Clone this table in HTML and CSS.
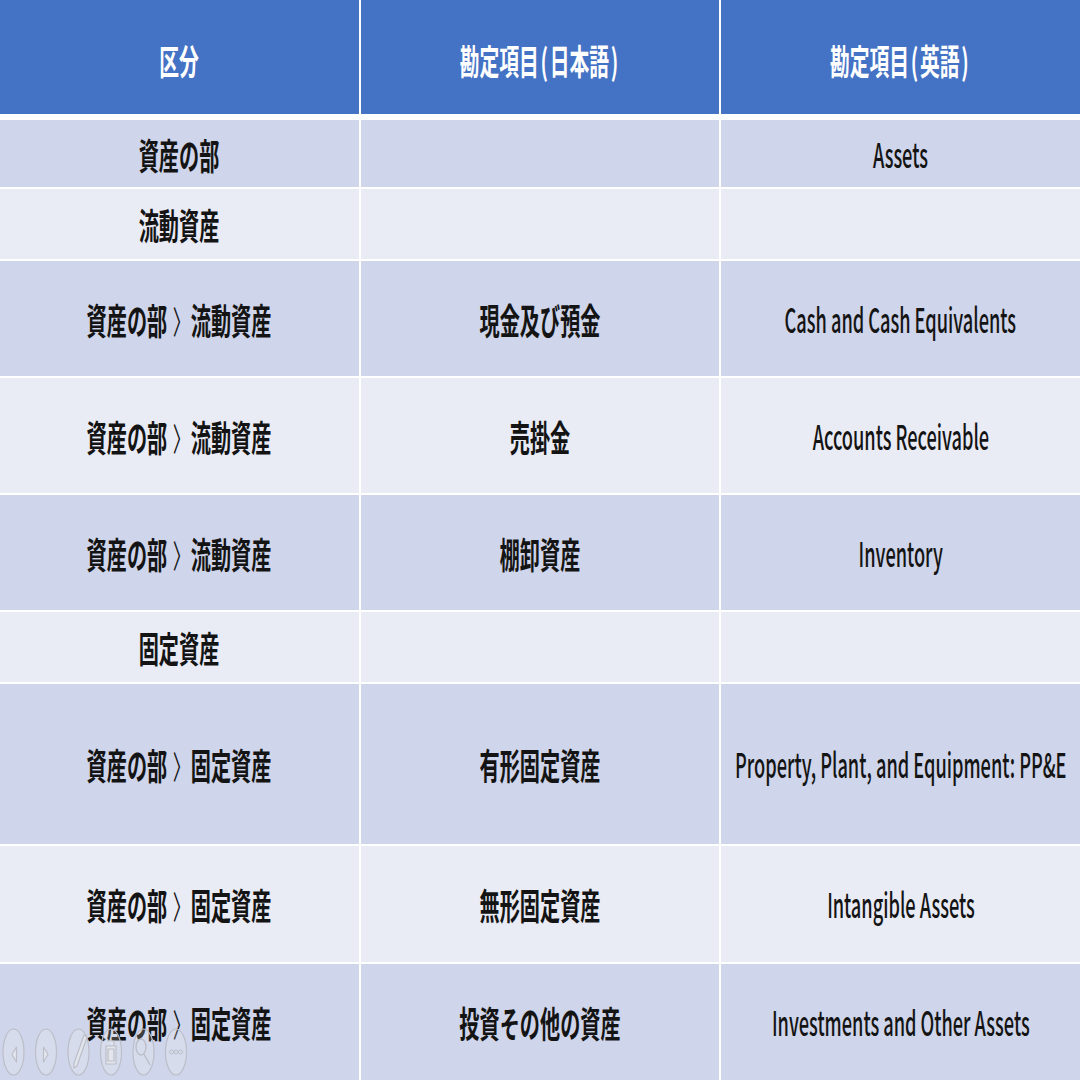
FILE: index.html
```html
<!DOCTYPE html>
<html lang="ja">
<head>
<meta charset="utf-8">
<title>勘定項目</title>
<link rel="stylesheet" href="styles.css">
</head>
<body>
<div class="sheet">
  <div class="grid head">
    <div class="cell"><span class="t">区分</span></div>
    <div class="cell"><span class="t">勘定項目<span class="p">(</span>日本語<span class="p">)</span></span></div>
    <div class="cell"><span class="t">勘定項目<span class="p">(</span>英語<span class="p">)</span></span></div>
  </div>
  <div class="grid body">
    <div class="cell dark"><span class="t">資産の部</span></div>
    <div class="cell dark"></div>
    <div class="cell dark"><span class="t en">Assets</span></div>

    <div class="cell light"><span class="t">流動資産</span></div>
    <div class="cell light"></div>
    <div class="cell light"></div>

    <div class="cell dark"><span class="t">資産の部<span class="chev">〉</span>流動資産</span></div>
    <div class="cell dark"><span class="t">現金及び預金</span></div>
    <div class="cell dark"><span class="t en">Cash and Cash Equivalents</span></div>

    <div class="cell light"><span class="t">資産の部<span class="chev">〉</span>流動資産</span></div>
    <div class="cell light"><span class="t">売掛金</span></div>
    <div class="cell light"><span class="t en">Accounts Receivable</span></div>

    <div class="cell dark"><span class="t">資産の部<span class="chev">〉</span>流動資産</span></div>
    <div class="cell dark"><span class="t">棚卸資産</span></div>
    <div class="cell dark"><span class="t en">Inventory</span></div>

    <div class="cell light"><span class="t">固定資産</span></div>
    <div class="cell light"></div>
    <div class="cell light"></div>

    <div class="cell dark"><span class="t">資産の部<span class="chev">〉</span>固定資産</span></div>
    <div class="cell dark"><span class="t">有形固定資産</span></div>
    <div class="cell dark"><span class="t en">Property, Plant, and Equipment: PP&amp;E</span></div>

    <div class="cell light"><span class="t">資産の部<span class="chev">〉</span>固定資産</span></div>
    <div class="cell light"><span class="t">無形固定資産</span></div>
    <div class="cell light"><span class="t en">Intangible Assets</span></div>

    <div class="cell dark"><span class="t">資産の部<span class="chev">〉</span>固定資産</span></div>
    <div class="cell dark"><span class="t">投資その他の資産</span></div>
    <div class="cell dark"><span class="t en">Investments and Other Assets</span></div>
  </div>

  <svg class="controls" width="192" height="52" viewBox="0 0 192 52" aria-hidden="true">
    <g fill="rgba(255,255,255,0.18)" stroke="#bcbec8" stroke-width="1.2">
      <ellipse cx="13.5" cy="26" rx="10.5" ry="23"/>
      <ellipse cx="46" cy="26" rx="10.5" ry="23"/>
      <ellipse cx="78.5" cy="26" rx="10.5" ry="23"/>
      <ellipse cx="111" cy="26" rx="10.5" ry="23"/>
      <ellipse cx="143.5" cy="26" rx="10.5" ry="23"/>
      <ellipse cx="176" cy="26" rx="10.5" ry="23"/>
    </g>
    <g fill="#e4e6ee" stroke="#bcbec8" stroke-width="1.2" stroke-linejoin="round">
      <path d="M16.5 21 L12 28.5 L16.5 36 Z"/>
      <path d="M43.5 21 L48 28.5 L43.5 36 Z"/>
      <path d="M84 9 L87 11 L77 40 L74 42 L74 37.5 Z"/>
      <path d="M107 15 h7 v5 M106 20 h10 v18 h-10 Z"/>
      <rect x="108" y="23" width="6" height="12"/>
    </g>
    <g fill="none" stroke="#bcbec8" stroke-width="1.4">
      <ellipse cx="141" cy="21" rx="5" ry="8"/>
      <path d="M144 28 L150 39"/>
    </g>
    <g fill="none" stroke="#bcbec8" stroke-width="1">
      <circle cx="171.5" cy="26" r="2"/>
      <circle cx="176" cy="26" r="2"/>
      <circle cx="180.5" cy="26" r="2"/>
    </g>
  </svg>
</div>
</body>
</html>
```

FILE: styles.css
```css
html, body {
  margin: 0;
  padding: 0;
  background: #ffffff;
}

.sheet {
  position: relative;
  width: 1080px;
  height: 1080px;
  overflow: hidden;
  font-family: "Noto Sans CJK JP", "Noto Sans", sans-serif;
}

.grid {
  display: grid;
  grid-template-columns: 359px 358px 359px;
  column-gap: 2px;
}

.head {
  grid-template-rows: 114px;
  background: #ffffff;
}

.body {
  margin-top: 6px;
  row-gap: 2px;
  grid-template-rows: 67px 70px 115px 115px 115px 70px 160px 116px 116px;
}

.cell {
  display: flex;
  align-items: center;
  justify-content: center;
  overflow: visible;
  min-width: 0;
}

.head .cell {
  background: #4472c4;
  color: #ffffff;
}

.dark {
  background: #cfd5ea;
}

.light {
  background: #e9ebf5;
}

.t {
  display: inline-block;
  flex: none;
  white-space: nowrap;
  font-size: 36px;
  font-weight: 700;
  line-height: 1;
  color: #141414;
  transform: scaleX(0.56);
}

.head .t {
  color: #ffffff;
  font-size: 35px;
  transform: translateY(2px) scaleX(0.565);
}

.p {
  margin: 0 3px;
}

.chev {
  font-size: 32px;
  font-weight: 400;
  margin-left: 10px;
  vertical-align: 1px;
}

.en {
  font-size: 34px;
  font-weight: 500;
  transform: scaleX(0.535);
}

.controls {
  position: absolute;
  left: 0;
  bottom: 2px;
}
```
